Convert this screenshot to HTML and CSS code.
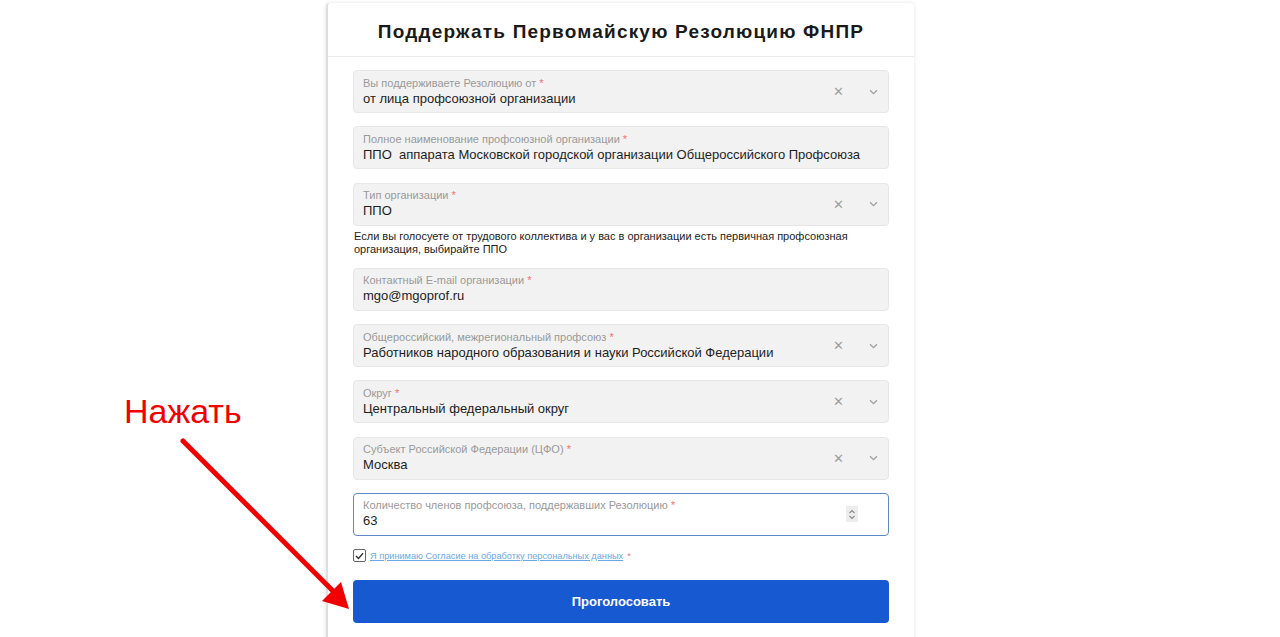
FILE: index.html
```html
<!DOCTYPE html>
<html lang="ru">
<head>
    <meta charset="UTF-8">
    <meta name="viewport" content="width=device-width, initial-scale=1.0">
    <title>Поддержать Первомайскую Резолюцию ФНПР</title>
    <link rel="stylesheet" href="styles.css">
</head>
<body>

<div class="page">
    <div class="card">
        <div class="card-header">
            <h1>Поддержать Первомайскую Резолюцию ФНПР</h1>
        </div>

        <form class="form">
            <div class="field">
                <div class="field-text">
                    <span class="label">Вы поддерживаете Резолюцию от <span class="req">*</span></span>
                    <span class="value">от лица профсоюзной организации</span>
                </div>
                <span class="clear">&#x2715;</span>
                <span class="chevron"><svg width="9" height="6" viewBox="0 0 9 6"><path d="M1 1.2 L4.5 4.6 L8 1.2" fill="none" stroke="#a0a0a0" stroke-width="1.3"/></svg></span>
            </div>

            <div class="field">
                <div class="field-text">
                    <span class="label">Полное наименование профсоюзной организации <span class="req">*</span></span>
                    <span class="value">ППО&nbsp; аппарата Московской городской организации Общероссийского Профсоюза</span>
                </div>
            </div>

            <div class="field">
                <div class="field-text">
                    <span class="label">Тип организации <span class="req">*</span></span>
                    <span class="value">ППО</span>
                </div>
                <span class="clear">&#x2715;</span>
                <span class="chevron"><svg width="9" height="6" viewBox="0 0 9 6"><path d="M1 1.2 L4.5 4.6 L8 1.2" fill="none" stroke="#a0a0a0" stroke-width="1.3"/></svg></span>
            </div>
            <p class="hint">Если вы голосуете от трудового коллектива и у вас в организации есть первичная профсоюзная организация, выбирайте ППО</p>

            <div class="field">
                <div class="field-text">
                    <span class="label">Контактный E-mail организации <span class="req">*</span></span>
                    <span class="value">mgo@mgoprof.ru</span>
                </div>
            </div>

            <div class="field">
                <div class="field-text">
                    <span class="label">Общероссийский, межрегиональный профсоюз <span class="req">*</span></span>
                    <span class="value">Работников народного образования и науки Российской Федерации</span>
                </div>
                <span class="clear">&#x2715;</span>
                <span class="chevron"><svg width="9" height="6" viewBox="0 0 9 6"><path d="M1 1.2 L4.5 4.6 L8 1.2" fill="none" stroke="#a0a0a0" stroke-width="1.3"/></svg></span>
            </div>

            <div class="field">
                <div class="field-text">
                    <span class="label">Округ <span class="req">*</span></span>
                    <span class="value">Центральный федеральный округ</span>
                </div>
                <span class="clear">&#x2715;</span>
                <span class="chevron"><svg width="9" height="6" viewBox="0 0 9 6"><path d="M1 1.2 L4.5 4.6 L8 1.2" fill="none" stroke="#a0a0a0" stroke-width="1.3"/></svg></span>
            </div>

            <div class="field">
                <div class="field-text">
                    <span class="label">Субъект Российской Федерации (ЦФО) <span class="req">*</span></span>
                    <span class="value">Москва</span>
                </div>
                <span class="clear">&#x2715;</span>
                <span class="chevron"><svg width="9" height="6" viewBox="0 0 9 6"><path d="M1 1.2 L4.5 4.6 L8 1.2" fill="none" stroke="#a0a0a0" stroke-width="1.3"/></svg></span>
            </div>

            <div class="field field-active">
                <div class="field-text">
                    <span class="label">Количество членов профсоюза, поддержавших Резолюцию <span class="req">*</span></span>
                    <span class="value">63</span>
                </div>
                <span class="spinner"><svg width="10" height="15" viewBox="0 0 10 15"><path d="M2.5 6 L5 3.5 L7.5 6 M2.5 9 L5 11.5 L7.5 9" fill="none" stroke="#888" stroke-width="1.1"/></svg></span>
            </div>

            <div class="agree">
                <span class="checkbox"><svg width="9" height="8" viewBox="0 0 9 8"><path d="M1 4 L3.5 6.5 L8 1.2" fill="none" stroke="#333" stroke-width="1.4"/></svg></span>
                <a href="#" class="agree-link">Я принимаю Согласие на обработку персональных данных</a>
                <span class="req">*</span>
            </div>

            <button type="button" class="submit">Проголосовать</button>
        </form>
    </div>
</div>

<!-- подсказка поверх страницы -->
<div class="note">Нажать</div>
<svg class="note-arrow" width="400" height="637" viewBox="0 0 400 637">
    <line x1="183" y1="441" x2="334" y2="592" stroke="#f00000" stroke-width="5" stroke-linecap="round"/>
    <polygon points="349,609 341,582 322,601" fill="#f00000"/>
</svg>

</body>
</html>
```

FILE: styles.css
```css
body {
    font-family: "Liberation Sans", Arial, sans-serif;
    margin: 0;
    background-color: #fff;
    color: #222;
    overflow: hidden;
}

.page {
    padding: 3px 0 0 326px;
}

.card {
    width: 588px;
    box-sizing: border-box;
    min-height: 660px;
    border-left: 2px solid #dedede;
    border-radius: 4px 4px 0 0;
    box-shadow: 0 0 4px rgba(0, 0, 0, 0.12);
    background-color: #fff;
}

.card-header {
    height: 54px;
    box-sizing: border-box;
    padding-top: 4px;
    display: flex;
    align-items: center;
    justify-content: center;
    border-bottom: 1px solid #ececec;
}

h1 {
    margin: 0;
    font-size: 19px;
    font-weight: bold;
    letter-spacing: 1.2px;
    color: #1a1a1a;
}

.form {
    padding: 13px 25px 0 25px;
}

.field {
    height: 43px;
    box-sizing: border-box;
    margin-bottom: 13.25px;
    padding: 0 0 0 9px;
    display: flex;
    align-items: center;
    background-color: #f2f2f2;
    border: 1px solid #e6e6e6;
    border-radius: 4px;
}

.field-text {
    flex: 1;
    display: flex;
    flex-direction: column;
    padding-top: 1px;
}

.label {
    font-size: 11px;
    line-height: 13px;
    color: #9a9a9a;
}

.req {
    color: #f07070;
}

.value {
    font-size: 13px;
    line-height: 18px;
    color: #1e1e1e;
}

.clear {
    width: 20px;
    margin-right: 19px;
    text-align: center;
    font-size: 13px;
    color: #a0a0a0;
}

.chevron {
    width: 12px;
    margin-right: 9px;
    display: flex;
    justify-content: center;
}

.field-active {
    background-color: #fff;
    border-color: #5d88c9;
}

.spinner {
    width: 12px;
    height: 16px;
    margin-right: 30px;
    display: flex;
    align-items: center;
    justify-content: center;
    background-color: #ededed;
}

.hint {
    margin: -9px 0 12px 1px;
    font-size: 11px;
    line-height: 13px;
    color: #222;
}

.agree {
    display: flex;
    align-items: center;
    gap: 4px;
    margin: 0 0 17.5px 0;
    font-size: 9.2px;
}

.checkbox {
    width: 11px;
    height: 11px;
    border: 1px solid #666;
    border-radius: 2px;
    display: flex;
    align-items: center;
    justify-content: center;
}

.agree-link {
    color: #6aa8e8;
}

.submit {
    width: 100%;
    height: 43px;
    border: none;
    border-radius: 4px;
    background-color: #1659d1;
    color: #fff;
    font-family: "Liberation Sans", Arial, sans-serif;
    font-size: 13px;
    font-weight: bold;
    cursor: pointer;
}

.note {
    position: absolute;
    left: 124px;
    top: 392px;
    font-family: "Liberation Sans", Arial, sans-serif;
    font-size: 34px;
    color: #f00000;
}

.note-arrow {
    position: absolute;
    left: 0;
    top: 0;
}
```
